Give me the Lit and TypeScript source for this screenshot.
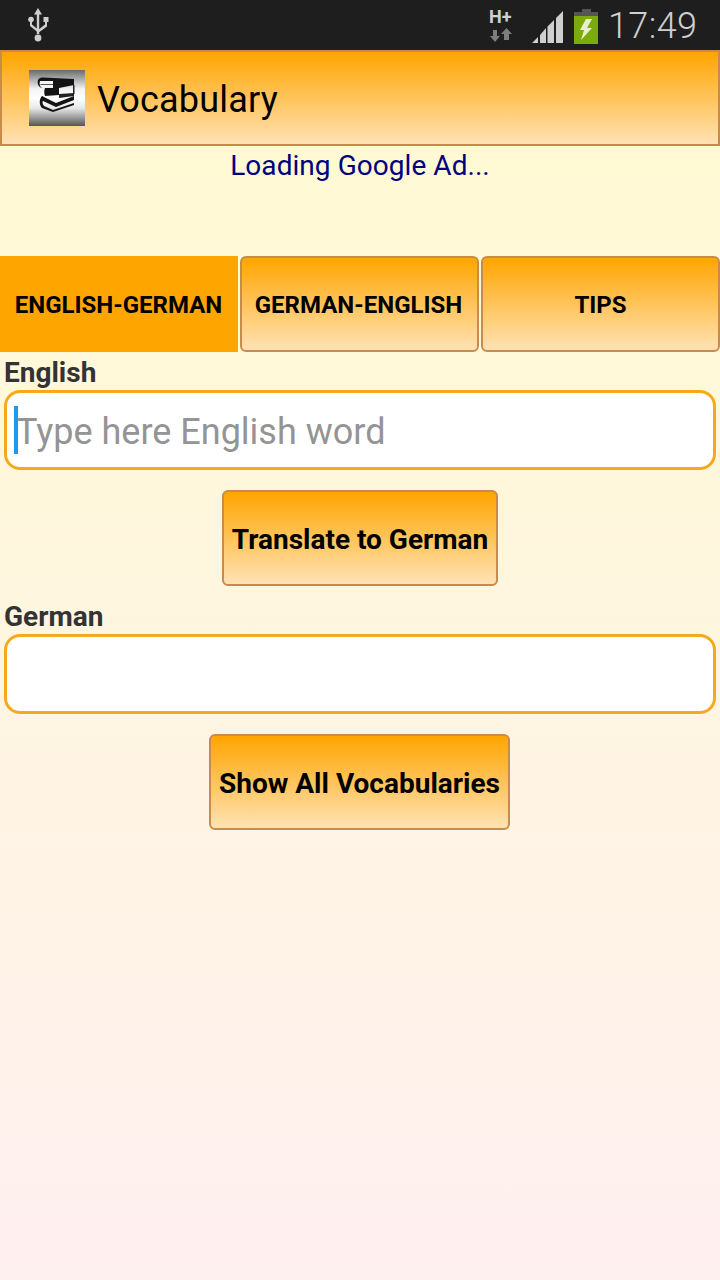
import { LitElement, html, css } from "lit";
import { customElement } from "lit/decorators.js";

@customElement("app-root")
export class AppRoot extends LitElement {
  static styles = css`
    :host { display: block; width: 720px; height: 1280px; font-family: Roboto, "Liberation Sans", sans-serif; overflow: hidden; }
    .page { height: 1280px; display: flex; flex-direction: column; background: linear-gradient(180deg, #fffbd0 0%, #fff0f0 100%); }
    .status { height: 50px; flex: none; background: #1e1e1e; display: flex; align-items: center; padding: 0 24px 0 26px; box-sizing: border-box; }
    .usb { width: 24px; height: 36px; margin-right: auto; }
    .net { width: 26px; height: 36px; margin-right: 15px; margin-top: 2px; overflow: visible; }
    .signal { width: 34px; height: 34px; margin-right: 9px; margin-top: 4px; }
    .battery { width: 26px; height: 36px; margin-right: 9px; margin-top: 4px; }
    .time { font-size: 36px; font-weight: 300; color: #cfcfcf; line-height: 50px; letter-spacing: 0.4px; padding-top: 2px; width: 88px; }
    .bar { height: 96px; flex: none; box-sizing: border-box; border: 2px solid #c98b4c; background: linear-gradient(180deg, #ffa500 0%, #ffe2b4 100%); display: flex; align-items: center; padding-left: 27px; gap: 12px; }
    .logo { width: 56px; height: 56px; background: linear-gradient(180deg, #6a6a6a 0%, #f4f4f4 34%, #ffffff 50%, #e8e8e8 68%, #555555 100%); display: block; flex: none; }
    .title { font-size: 36px; color: #000; letter-spacing: 0.2px; padding-top: 4px; }
    .ad { height: 110px; flex: none; box-sizing: border-box; text-align: center; font-size: 28px; letter-spacing: 0.05px; line-height: 40px; color: #000080; }
    .tabs { display: grid; grid-template-columns: 238px 239px 239px; gap: 2px; height: 96px; flex: none; }
    .tab { box-sizing: border-box; display: flex; align-items: center; justify-content: center; padding-top: 2px; font-size: 24px; font-weight: 700; color: #000; border: 2px solid #c98b4c; border-radius: 6px; background: linear-gradient(180deg, #ffa500 0%, #ffe2b4 100%); }
    .tab.active { background: #ffa500; border: none; border-radius: 0; padding-top: 2px; padding-right: 1px; }
    .tab.mid { padding-right: 2px; }
    .label { font-size: 28px; font-weight: 700; color: #333; height: 38px; line-height: 42px; padding-left: 4px; flex: none; }
    .label.second { margin-top: 10px; }
    .input { height: 80px; flex: none; box-sizing: border-box; margin: 0 4px; border: 3px solid #f7a91d; border-radius: 16px; background: #fff; display: flex; align-items: center; padding-left: 7px; font-size: 36px; color: #949494; }
    .caret { width: 4px; height: 48px; background: #1a9bf0; flex: none; margin-top: -1px; margin-right: -2px; }
    .hint { padding-top: 4px; }
    .action { align-self: center; box-sizing: border-box; height: 96px; margin-top: 20px; display: flex; align-items: center; justify-content: center; padding-top: 2px; font-size: 28px; font-weight: 700; color: #000; border: 2px solid #c98b4c; border-radius: 6px; background: linear-gradient(180deg, #ffa500 0%, #ffe2b4 100%); }
    .translate { width: 276px; }
    .show { width: 301px; margin-right: 1px; }
  `;

  render() {
    return html`<div class="page">
      <div class="status">
        <svg class="usb" viewBox="0 0 24 36" fill="#cfcfcf">
          <path d="M12 1l4 6.500h-2.800V27h-2.400V7.500H8z"/>
          <circle cx="12" cy="31" r="3.400"/>
          <circle cx="5" cy="12.500" r="2.800"/>
          <rect x="17.500" y="10" width="5" height="5"/>
          <path d="M4 13h2v4.500l6 5v3l-8-6.500zM19 13h2v6.500L12 26v-3l7-5.500z"/>
        </svg>
        <svg class="net" viewBox="0 0 26 36">
          <text x="0" y="15" font-family="Roboto" font-weight="700" font-size="18" fill="#cfcfcf">H+</text>
          <path d="M1 28h3v-6h4v6h3l-5 6zM17.500 20l5.500 6h-3v6h-5v-6h-3z" fill="#7d7d7d"/>
        </svg>
        <svg class="signal" viewBox="0 0 34 34" fill="#cfcfcf">
          <path d="M2 33L8 27V33zM10 25l6-7V33h-6zM17.500 16.500L24 10V33h-6.500zM26 8l7-7V33h-7z"/>
        </svg>
        <svg class="battery" viewBox="0 0 26 36">
          <rect x="9" y="0" width="9" height="4" fill="#555"/>
          <rect x="1" y="3" width="24" height="5" fill="#555"/>
          <rect x="1" y="7" width="24" height="28" fill="#7cab0c"/>
          <path d="M13 10L7 21h4L8 31 19 19h-5l5-9z" fill="#e8f0c8"/>
        </svg>
        <span class="time">17:49</span>
      </div>
      <div class="bar">
        <svg class="logo" viewBox="0 0 56 56">
          <path d="M9 10c1-2 3-2.500 5-2.500L45 9v6L30 18H13c-4-1-5-5-4-8z" fill="#141414"/>
          <path d="M11 11h13v7H13c-2-1-3-4-2-7z" fill="#f4f4f4"/>
          <path d="M11.500 14h12.500v1H11.500z" fill="#555"/>
          <path d="M16 18h14v7l-14 1c-1-2-1-6 0-8z" fill="#141414"/>
          <path d="M44 15h1.500v9L44 25z" fill="#222"/>
          <path d="M30 24l15-1v3l-15 2z" fill="#222"/>
          <path d="M13 26l14 7 18-7v4l-18 7-13-6c-1-2-1-3-1-5z" fill="#141414"/>
          <path d="M13 26c-3 3-3 9 0 12l11 4 21-7v-2l-21 7-9-4c-2-2-2-5 0-7z" fill="#141414"/>
        </svg>
        <span class="title">Vocabulary</span>
      </div>
      <div class="ad">Loading Google Ad...</div>
      <div class="tabs">
        <div class="tab active">ENGLISH-GERMAN</div>
        <div class="tab mid">GERMAN-ENGLISH</div>
        <div class="tab">TIPS</div>
      </div>
      <div class="label">English</div>
      <div class="input"><span class="caret"></span><span class="hint">Type here English word</span></div>
      <div class="action translate">Translate to German</div>
      <div class="label second">German</div>
      <div class="input"></div>
      <div class="action show">Show All Vocabularies</div>
    </div>`;
  }
}
